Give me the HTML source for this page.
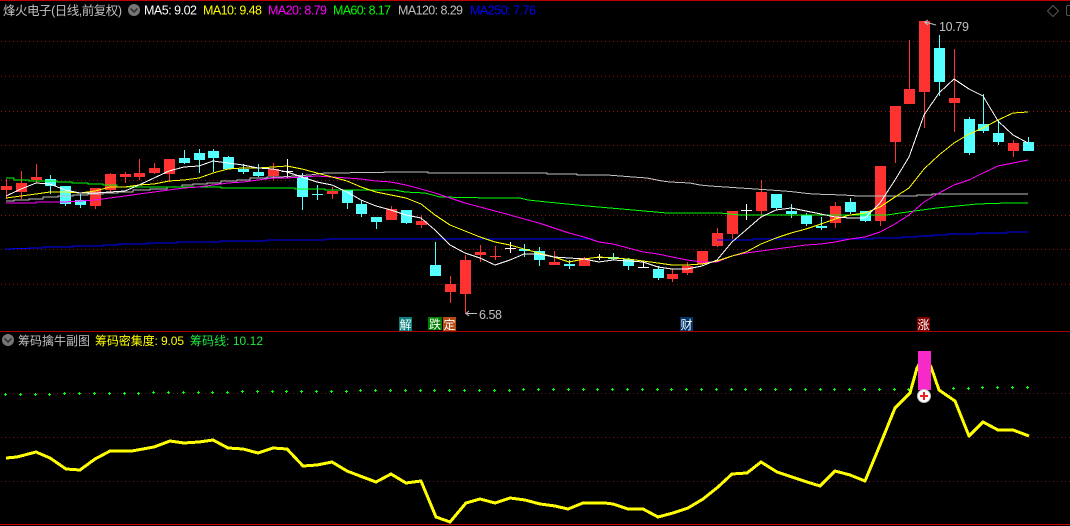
<!DOCTYPE html>
<html><head><meta charset="utf-8"><style>
html,body{margin:0;padding:0;background:#000;width:1070px;height:526px;overflow:hidden}
svg{display:block}
text{font-family:"Liberation Sans","Noto Sans CJK SC",sans-serif;font-size:12.5px}
.l{fill:none;stroke-width:1;shape-rendering:crispEdges}
</style></head><body>
<svg width="1070" height="526" viewBox="0 0 1070 526" xmlns="http://www.w3.org/2000/svg">
<rect width="1070" height="526" fill="#000"/>
<g stroke="#8f1414" stroke-width="1" stroke-dasharray="1 3" shape-rendering="crispEdges">
<path d="M1 41.5H1070M1 76.5H1070M1 111.5H1070M1 145.5H1070M1 180.5H1070M1 215.5H1070M1 249.5H1070M1 284.5H1070"/>
</g>
<g stroke="#6e1414" stroke-width="1" stroke-dasharray="1 3" shape-rendering="crispEdges">
<path d="M1 393.5H1070M1 437.5H1070M1 481.5H1070"/>
</g>
<rect x="0" y="0" width="1070" height="1" fill="#c00000"/>
<rect x="0" y="331" width="1070" height="1" fill="#a80000"/>
<rect x="0" y="524" width="1070" height="1" fill="#c80000"/>

<!-- red candles -->
<path fill="#ff3232" shape-rendering="crispEdges" d="M1 186h11v4h-11zM6 179h1v20h-1zM16 183h11v9h-11zM21 171h1v28h-1zM31 177h11v3h-11zM36 164h1v19h-1zM90 188h11v18h-11zM95 188h1v21h-1zM105 174h11v16h-11zM110 173h1v19h-1zM120 174h11v3h-11zM125 172h1v11h-1zM134 173h11v4h-11zM139 159h1v21h-1zM149 168h11v5h-11zM154 163h1v11h-1zM164 159h11v15h-11zM169 159h1v23h-1zM268 169h11v7h-11zM273 163h1v17h-1zM327 191h11v3h-11zM332 187h1v12h-1zM386 209h11v11h-11zM391 206h1v14h-1zM416 221h11v4h-11zM421 215h1v13h-1zM445 284h11v8h-11zM450 276h1v27h-1zM460 260h11v34h-11zM465 255h1v59h-1zM475 252h11v3h-11zM480 245h1v17h-1zM490 256h11v1h-11zM495 246h1v14h-1zM549 262h11v3h-11zM554 251h1v14h-1zM579 258h11v8h-11zM584 257h1v9h-1zM667 274h11v5h-11zM672 269h1v13h-1zM682 266h11v7h-11zM687 262h1v13h-1zM697 251h11v13h-11zM702 251h1v14h-1zM712 233h11v13h-11zM717 228h1v19h-1zM727 211h11v23h-11zM732 211h1v28h-1zM756 192h11v19h-11zM761 180h1v38h-1zM830 206h11v17h-11zM835 202h1v26h-1zM875 166h11v55h-11zM880 166h1v60h-1zM890 106h11v36h-11zM895 106h1v57h-1zM904 89h11v15h-11zM909 40h1v64h-1zM919 21h11v71h-11zM924 21h1v107h-1zM949 98h11v5h-11zM954 49h1v83h-1zM1008 143h11v8h-11zM1013 140h1v17h-1z"/>
<!-- cyan candles -->
<path fill="#54ffff" shape-rendering="crispEdges" d="M45 179h11v7h-11zM50 175h1v19h-1zM60 186h11v18h-11zM65 186h1v20h-1zM75 200h11v5h-11zM80 194h1v14h-1zM179 158h11v5h-11zM184 150h1v14h-1zM194 153h11v7h-11zM199 149h1v24h-1zM208 151h11v7h-11zM213 149h1v23h-1zM223 157h11v12h-11zM228 156h1v13h-1zM238 169h11v3h-11zM243 164h1v10h-1zM253 172h11v4h-11zM258 164h1v13h-1zM297 177h11v20h-11zM302 173h1v37h-1zM312 194h11v1h-11zM317 185h1v15h-1zM342 190h11v13h-11zM347 190h1v19h-1zM356 204h11v10h-11zM361 200h1v17h-1zM371 217h11v5h-11zM376 217h1v12h-1zM401 210h11v13h-11zM406 210h1v14h-1zM430 265h11v11h-11zM435 242h1v34h-1zM519 249h11v2h-11zM524 244h1v13h-1zM534 251h11v9h-11zM539 247h1v19h-1zM564 264h11v2h-11zM569 260h1v9h-1zM608 257h11v2h-11zM613 253h1v7h-1zM623 259h11v7h-11zM628 258h1v12h-1zM653 269h11v9h-11zM658 266h1v14h-1zM771 194h11v14h-11zM776 194h1v16h-1zM786 211h11v3h-11zM791 204h1v14h-1zM801 215h11v9h-11zM806 213h1v13h-1zM816 226h11v2h-11zM821 217h1v13h-1zM845 202h11v10h-11zM850 198h1v16h-1zM860 211h11v10h-11zM865 211h1v11h-1zM934 48h11v34h-11zM939 35h1v61h-1zM964 119h11v34h-11zM969 117h1v38h-1zM978 124h11v7h-11zM983 94h1v39h-1zM993 133h11v9h-11zM998 120h1v25h-1zM1023 142h11v9h-11zM1028 137h1v14h-1z"/>
<!-- white doji -->
<path fill="#fff" shape-rendering="crispEdges" d="M282 171h11v1h-11zM287 159h1v19h-1zM505 248h11v1h-11zM510 242h1v11h-1zM594 257h11v1h-11zM599 254h1v6h-1zM638 267h11v1h-11zM643 261h1v7h-1zM741 210h11v1h-11zM746 204h1v16h-1z"/>

<!-- MA250 blue -->
<polyline class="l" stroke="#0000ff" points="5,249 14,249 14,248.5 29,248.5 29,248 43,248 43,247 73,247 73,246 103,246 103,245 118,245 118,244 147,244 147,243 177,243 177,242 220,242 220,241 267,241 267,240 325,240 325,239 430,239 593,239"/>
<polyline class="l" stroke="#0000ff" points="717,240 753,240 753,239 873,239 873,238 902,238 902,237 917,237 917,236 932,236 932,235 947,235 947,234 977,234 977,233 1007,233 1007,232 1028,232"/>
<!-- MA120 grey -->
<polyline class="l" stroke="#c0c0c0" points="6,201 14,201 14,200 29,200 29,199 43,199 43,197 58,197 58,196 73,196 73,195 88,195 88,194 103,194 103,193 118,193 118,192 133,192 133,190 150,190 150,189 167,189 167,187 182,187 182,185 193,185 193,184 207,184 207,183 221,183 221,181 237,181 237,180 250,180 250,178 267,178 267,177 280,177 295,176 310,175 325,173 340,173 360,172.5 384,172.5 384,172 428,172 428,173 547,173 547,174 577,174 577,175 607,175 620,176 633,177 647,178 662,181 670,182 690,183 700,185 710,186 725,187 740,188 755,189 770,190 784,191 795,192 803,193 813,194 843,195 858,196 917,196 917,195 932,195 932,194 1028,194"/>
<!-- MA60 green -->
<polyline class="l" stroke="#00ff00" points="6,178 14,178 14,180 29,180 29,181 57,181 57,182 72,182 72,183 88,183 88,184 103,184 103,185 117,185 117,187 221,187 221,188 295,188 295,189 325,189 325,190 395,190 405,192 425,193 440,197 490,198 520,198 528,200 547,202 567,204 587,206 610,208 633,210 667,213 720,213 740,215 887,215 907,212 937,208 977,204 1007,203 1028,203"/>
<!-- MA20 magenta -->
<polyline class="l" stroke="#ff00ff" points="6,203 36,203 36,202 65,202 80,201 95,200 110,198 125,196 139,194 154,192 169,190 184,188 199,187 213,185 228,183 243,182 258,180 273,178 287,178 302,177 317,176 332,177 347,178 361,179 376,181 391,182 406,185 421,189 435,193 450,198 465,203 480,207 495,211 510,215 524,219 539,223 554,228 569,233 584,237 599,242 613,244 628,248 643,252 658,254 672,257 687,260 702,262 717,262 732,256 746,253 761,251 776,249 791,247 806,245 821,244 835,242 850,239 865,237 880,232 895,224 909,215 924,202 939,193 954,185 969,180 983,173 998,166 1013,163 1028,160"/>
<!-- MA10 yellow -->
<polyline class="l" stroke="#ffff00" points="6,198 21,196 36,194 50,192 65,192 80,193 95,191 110,187 125,187 139,185 154,184 169,181 184,180 199,178 213,173 228,169 243,168 258,168 273,167 287,166 302,169 317,173 332,177 347,181 361,187 376,192 391,195 406,198 421,204 435,215 450,225 465,231 480,237 495,242 510,245 524,249 539,253 554,257 569,262 584,259 599,257 613,258 628,259 643,261 658,263 672,265 687,265 702,264 717,261 732,256 746,252 761,244 776,238 791,233 806,229 821,224 835,219 850,215 865,213 880,207 895,197 909,188 924,169 939,155 954,143 969,134 983,128 998,120 1013,113 1028,112"/>
<!-- MA5 white -->
<polyline class="l" stroke="#ffffff" points="6,196 21,189 36,183 50,184 65,190 80,193 95,193 110,192 125,191 139,185 154,178 169,171 184,167 199,166 213,161 228,163 243,165 258,168 273,169 287,172 302,177 317,182 332,185 347,192 361,200 376,206 391,210 406,215 421,218 435,230 450,245 465,253 480,258 495,265 510,260 524,254 539,254 554,257 569,258 584,259 599,262 613,260 628,261 643,262 658,267 672,269 687,269 702,266 717,260 732,242 746,230 761,217 776,210 791,208 806,211 821,214 835,217 850,218 865,218 880,203 895,180 909,157 924,115 939,93 954,79 969,89 983,96 998,121 1013,135 1028,143"/>

<!-- header -->
<circle cx="134" cy="10" r="6" fill="#777"/>
<path d="M130.5 8.5L134 12L137.5 8.5" fill="none" stroke="#333" stroke-width="1.6"/>
<text x="3" y="15" fill="#c0c0c0" font-size="12" textLength="119" lengthAdjust="spacing">烽火电子(日线,前复权)</text>
<text x="144" y="14.5" fill="#ffffff" textLength="53">MA5: 9.02</text>
<text x="203" y="14.5" fill="#ffff00" textLength="59">MA10: 9.48</text>
<text x="268" y="14.5" fill="#ff00ff" textLength="59">MA20: 8.79</text>
<text x="333" y="14.5" fill="#00ff00" textLength="58">MA60: 8.17</text>
<text x="398" y="14.5" fill="#c0c0c0" textLength="65">MA120: 8.29</text>
<text x="470" y="14.5" fill="#0000ff" textLength="66">MA250: 7.76</text>
<path d="M1053 5.5L1058.5 11L1053 16.500L1047.500 11Z" fill="none" stroke="#555" stroke-width="1"/>
<rect x="1066.500" y="5.500" width="8" height="10" rx="1.500" fill="none" stroke="#555"/>

<!-- annotations -->
<text x="939" y="31" fill="#c0c0c0" textLength="30">10.79</text>
<path d="M936 25L925 22M928 20L924.500 22L928 25" fill="none" stroke="#c0c0c0" stroke-width="1"/>
<text x="479" y="319" fill="#c0c0c0" textLength="23">6.58</text>
<path d="M477 313.500H466M469 311L466 313.500L469 316" fill="none" stroke="#c0c0c0" stroke-width="1"/>

<!-- signal boxes -->
<rect x="399" y="317" width="13" height="14" fill="#0a7f7f"/>
<text x="399.500" y="329" fill="#fff" font-size="12" style="font-size:12px">解</text>
<rect x="428" y="317" width="14" height="13" fill="#008000"/>
<text x="429" y="328.500" fill="#fff" style="font-size:12px">跌</text>
<rect x="443" y="317" width="13" height="14" fill="#b84a14"/>
<text x="443.500" y="329" fill="#fff" style="font-size:12px">定</text>
<rect x="680" y="317" width="13" height="14" fill="#003468"/>
<text x="680.500" y="329" fill="#fff" style="font-size:12px">财</text>
<rect x="917" y="317" width="13" height="14" fill="#800000"/>
<text x="917.500" y="329" fill="#fff" style="font-size:12px">涨</text>

<!-- sub panel header -->
<circle cx="8" cy="340" r="6" fill="#777"/>
<path d="M4.500 338.500L8 342L11.500 338.500" fill="none" stroke="#333" stroke-width="1.600"/>
<text x="18" y="345" fill="#c0c0c0" textLength="72" style="font-size:12px">筹码擒牛副图</text>
<text x="95" y="345" fill="#ffff00" textLength="89" style="font-size:12px">筹码密集度: 9.05</text>
<text x="190" y="345" fill="#20e840" textLength="73" style="font-size:12px">筹码线: 10.12</text>

<!-- green plus markers -->
<path fill="none" stroke="#00ff00" stroke-width="1" shape-rendering="crispEdges" d="M4 394.500h3m-1.500-1.500v3M19 394.500h3m-1.500-1.500v3M34 394.500h3m-1.500-1.500v3M48 394.500h3m-1.500-1.500v3M63 393.500h3m-1.500-1.500v3M78 393.500h3m-1.500-1.500v3M93 393.500h3m-1.500-1.500v3M108 393.500h3m-1.500-1.500v3M123 393.500h3m-1.500-1.500v3M137 393.500h3m-1.500-1.500v3M152 392.500h3m-1.500-1.500v3M167 392.500h3m-1.500-1.500v3M182 392.500h3m-1.500-1.500v3M197 392.500h3m-1.500-1.500v3M211 392.500h3m-1.500-1.500v3M226 392.500h3m-1.500-1.500v3M241 391.500h3m-1.500-1.500v3M256 391.500h3m-1.500-1.500v3M271 391.500h3m-1.500-1.500v3M285 391.500h3m-1.500-1.500v3M300 391.500h3m-1.500-1.500v3M315 391.500h3m-1.500-1.500v3M330 391.500h3m-1.500-1.500v3M345 391.500h3m-1.500-1.500v3M359 390.500h3m-1.500-1.500v3M374 390.500h3m-1.500-1.500v3M389 390.500h3m-1.500-1.500v3M404 390.500h3m-1.500-1.500v3M419 390.500h3m-1.500-1.500v3M433 390.500h3m-1.500-1.500v3M448 390.500h3m-1.500-1.500v3M463 390.500h3m-1.500-1.500v3M478 390.500h3m-1.500-1.500v3M493 390.500h3m-1.500-1.500v3M508 390.500h3m-1.500-1.500v3M522 389.500h3m-1.500-1.500v3M537 389.500h3m-1.500-1.500v3M552 389.500h3m-1.500-1.500v3M567 389.500h3m-1.500-1.500v3M582 389.500h3m-1.500-1.500v3M596 389.500h3m-1.500-1.500v3M611 389.500h3m-1.500-1.500v3M626 389.500h3m-1.500-1.500v3M641 389.500h3m-1.500-1.500v3M656 389.500h3m-1.500-1.500v3M670 389.500h3m-1.500-1.500v3M685 389.500h3m-1.500-1.500v3M700 389.500h3m-1.500-1.500v3M715 389.500h3m-1.500-1.500v3M730 389.500h3m-1.500-1.500v3M744 389.500h3m-1.500-1.500v3M759 389.500h3m-1.500-1.500v3M774 389.500h3m-1.500-1.500v3M789 389.500h3m-1.500-1.500v3M804 389.500h3m-1.500-1.500v3M819 389.500h3m-1.500-1.500v3M833 389.500h3m-1.500-1.500v3M848 389.500h3m-1.500-1.500v3M863 389.500h3m-1.500-1.500v3M878 389.500h3m-1.500-1.500v3M893 389.500h3m-1.500-1.500v3M907 389.500h3m-1.500-1.500v3M937 388.500h3m-1.500-1.500v3M952 388.500h3m-1.500-1.500v3M967 388.500h3m-1.500-1.500v3M981 387.500h3m-1.500-1.500v3M996 387.500h3m-1.500-1.500v3M1011 387.500h3m-1.500-1.500v3M1026 387.500h3m-1.500-1.500v3"/>

<!-- yellow density line -->
<polyline fill="none" stroke="#ffff00" stroke-width="3" stroke-linejoin="round" points="6,458 17,457 36,452 50,458 66,469 80,470 95,459 110,451 132,451 154,447 170,441 184,443 199,442 213,440 228,448 243,449 258,453 273,448 287,449 303,466 317,465 332,462 347,471 360,476 376,482 391,474 406,483 421,481 436,517 450,522 466,503 480,499 495,503 510,498 525,500 540,504 555,506 568,509 583,503 605,503 613,504 628,509 643,509 658,517 673,513 688,508 703,499 718,487 732,474 747,473 761,462 777,472 807,482 820,486 835,471 850,475 865,481 880,445 895,408 910,393 917,368 924,356 931,367 939,390 955,401 969,436 983,422 998,430 1013,430 1029,436" shape-rendering="crispEdges"/>

<rect x="918" y="351" width="13" height="39" fill="#f52ac8"/>
<circle cx="924" cy="396" r="6.500" fill="#fff" stroke="#bbb" stroke-width="1"/>
<path d="M920 396h8M924 392v8" stroke="#f02020" stroke-width="2" fill="none"/>
</svg>
</body></html>
